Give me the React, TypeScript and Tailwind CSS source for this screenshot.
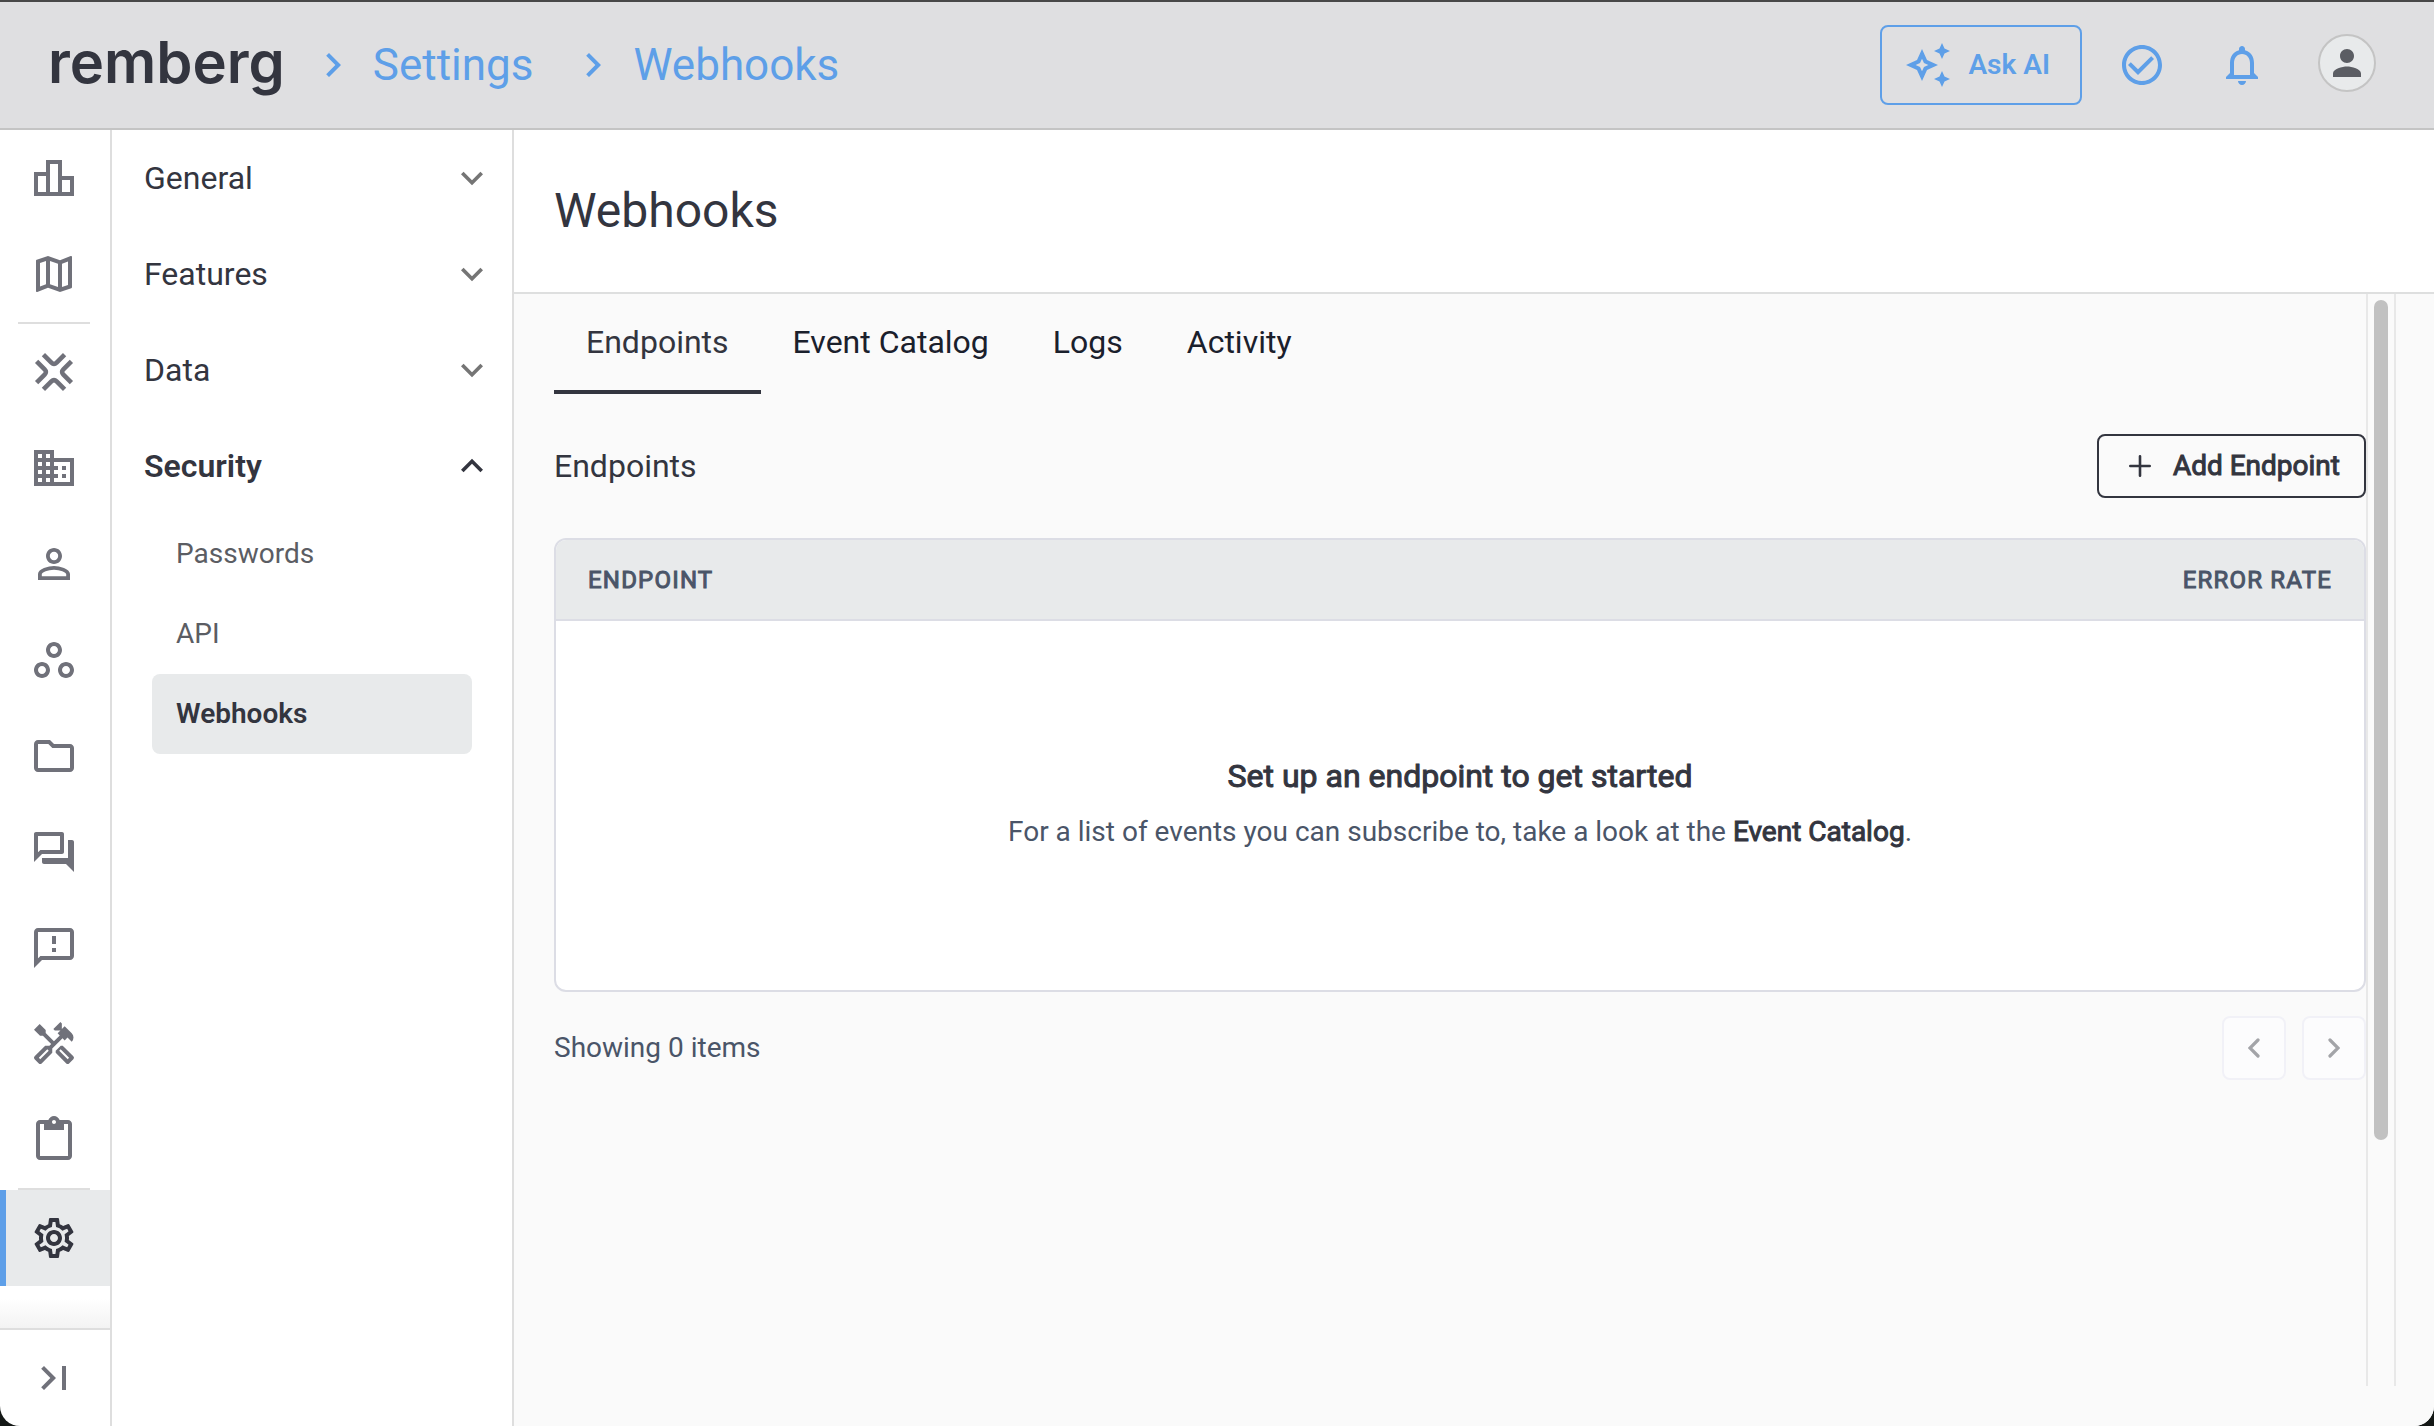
import { useState } from "react";
import type { IconType } from "react-icons";
import {
  MdCheckCircleOutline,
  MdChevronRight,
  MdContentPaste,
  MdExpandLess,
  MdExpandMore,
  MdLastPage,
  MdNotificationsNone,
  MdOutlineAutoAwesome,
  MdOutlineBusiness,
  MdOutlineFeedback,
  MdOutlineFolder,
  MdOutlineForum,
  MdOutlineHandyman,
  MdOutlineLeaderboard,
  MdOutlineMap,
  MdOutlineSettings,
  MdOutlineWorkspaces,
  MdPerson,
  MdPersonOutline,
} from "react-icons/md";

const AssetsIcon = () => (
  <svg
    viewBox="0 0 24 24"
    className="size-12"
    fill="none"
    stroke="currentColor"
    strokeWidth="2.3"
  >
    <path d="M6.7 3.3l4 4q1.3 1.3 2.6 0l4-4" />
    <path d="M6.7 20.7l4-4q1.3-1.3 2.6 0l4 4" />
    <path d="M3.3 6.7l4 4q1.3 1.3 0 2.6l-4 4" />
    <path d="M20.7 6.7l-4 4q-1.3 1.3 0 2.6l4 4" />
  </svg>
);

const overviewLinks = [
  { label: "Dashboard", Icon: MdOutlineLeaderboard },
  { label: "Map", Icon: MdOutlineMap },
];

const moduleLinks = [
  { label: "Assets", Icon: AssetsIcon as IconType },
  { label: "Organizations", Icon: MdOutlineBusiness },
  { label: "Contacts", Icon: MdPersonOutline },
  { label: "Parts", Icon: MdOutlineWorkspaces },
  { label: "Files", Icon: MdOutlineFolder },
  { label: "Cases", Icon: MdOutlineForum },
  { label: "Tickets", Icon: MdOutlineFeedback },
  { label: "Work Orders", Icon: MdOutlineHandyman },
  { label: "Forms", Icon: MdContentPaste },
];

const settingsGroups = [
  { title: "General", items: [] },
  { title: "Features", items: [] },
  { title: "Data", items: [] },
  { title: "Security", items: ["Passwords", "API", "Webhooks"] },
];

const tabs = ["Endpoints", "Event Catalog", "Logs", "Activity"];

const PageChevron = ({ left }: { left?: boolean }) => (
  <svg
    viewBox="0 0 12 20"
    className="h-5 w-3"
    fill="none"
    stroke="currentColor"
    strokeWidth="3.2"
    strokeLinecap="round"
  >
    <path d={left ? "M10 2l-8 8 8 8" : "M2 2l8 8-8 8"} />
  </svg>
);

const RailLink = ({ label, Icon }: { label: string; Icon: IconType }) => (
  <a
    href="#"
    aria-label={label}
    className="flex h-24 w-full items-center pl-[30px] text-[#70717a]"
  >
    <Icon className="size-12" />
  </a>
);

const Header = () => (
  <header className="flex h-[130px] shrink-0 items-center justify-between border-t-2 border-b-2 border-t-[#484848] border-b-[#c4c4c4] bg-[#dfdfe1] pr-[58px] pl-12 text-[#5e9fe8]">
    <nav className="flex items-center text-[44px] leading-[56px]">
      <a
        href="#"
        className="pb-1.5 font-[Inter,sans-serif] text-[58px] font-semibold text-[#33353f]"
      >
        remberg
      </a>
      <MdChevronRight className="mr-4 ml-6 size-12" />
      <a href="#">Settings</a>
      <MdChevronRight className="mr-4 ml-9 size-12" />
      <a href="#">Webhooks</a>
    </nav>
    <div className="flex items-center">
      <button className="flex h-20 items-center gap-4 rounded-lg border-2 border-[#5e9fe8] pr-[30px] pl-[22px] text-[28px] font-semibold">
        <MdOutlineAutoAwesome className="size-12" />
        Ask AI
      </button>
      <button aria-label="Tasks" className="ml-9">
        <MdCheckCircleOutline className="size-12" />
      </button>
      <button aria-label="Notifications" className="ml-[52px]">
        <MdNotificationsNone className="size-12" />
      </button>
      <button
        aria-label="Account"
        className="mb-1 ml-[52px] flex size-[58px] items-center justify-center rounded-full border-2 border-[#c4c4c4] bg-[#e8eaeb] text-[#5b5d63]"
      >
        <MdPerson className="size-[42px]" />
      </button>
    </div>
  </header>
);

const Rail = () => (
  <aside className="flex w-28 shrink-0 flex-col border-r-2 border-[#dedede]">
    {overviewLinks.map((link) => (
      <RailLink key={link.label} {...link} />
    ))}
    <hr className="mr-5 ml-[18px] border-t-2 border-[#dedede]" />
    {moduleLinks.map((link) => (
      <RailLink key={link.label} {...link} />
    ))}
    <hr className="mr-5 ml-[18px] border-t-2 border-[#dedede]" />
    <a
      href="#"
      aria-label="Settings"
      className="flex h-24 items-center border-l-6 border-[#5e9fe8] bg-[#e8eaeb] pl-6 text-[#33353f]"
    >
      <MdOutlineSettings className="size-12" />
    </a>
    <div className="min-h-4 flex-1 bg-linear-to-b from-white from-30% to-[#f3f3f3]" />
    <button
      aria-label="Expand navigation"
      className="flex h-[98px] items-center border-t-2 border-[#dedede] pl-[30px] text-[#70717a]"
    >
      <MdLastPage className="size-12" />
    </button>
  </aside>
);

const SettingsNav = () => {
  const [open, setOpen] = useState("Security");

  return (
    <nav className="w-[402px] shrink-0 border-r-2 border-[#dedede]">
      {settingsGroups.map(({ title, items }) => {
        const isOpen = open === title;
        return (
          <div key={title}>
            <button
              onClick={() => setOpen(isOpen ? "" : title)}
              aria-expanded={isOpen}
              className={`flex h-24 w-full items-center justify-between pr-[18px] pl-8 text-[32px] ${
                isOpen ? "font-semibold" : ""
              }`}
            >
              {title}
              {isOpen ? (
                <MdExpandLess className="size-11" />
              ) : (
                <MdExpandMore className="size-11 text-[#757575]" />
              )}
            </button>
            {isOpen && (
              <div className="mr-10 ml-10">
                {items.map((item) => (
                  <a
                    key={item}
                    href="#"
                    className={`flex h-20 items-center rounded-lg px-6 text-[28px] ${
                      item === "Webhooks"
                        ? "bg-[#e8eaeb] font-semibold"
                        : "text-[#5b5d63]"
                    }`}
                  >
                    {item}
                  </a>
                ))}
              </div>
            )}
          </div>
        );
      })}
    </nav>
  );
};

const EndpointsTable = () => (
  <div className="mt-10 overflow-hidden rounded-xl border-2 border-[#dcdde5] bg-white">
    <table className="w-full">
      <thead className="border-b-2 border-[#dcdde5] bg-[#e8eaeb] text-2xl tracking-wider text-[#4a5568] uppercase [-webkit-text-stroke:1px]">
        <tr className="h-20">
          <th className="px-8 text-left font-normal">Endpoint</th>
          <th className="px-8 text-right font-normal">Error Rate</th>
        </tr>
      </thead>
      <tbody>
        <tr>
          <td colSpan={2} className="h-[370px] pb-1 text-center">
            <h3 className="text-[32px] leading-[48px] [-webkit-text-stroke:1px]">
              Set up an endpoint to get started
            </h3>
            <p className="mt-2 text-[28px] leading-[48px] text-[#4a5568]">
              For a list of events you can subscribe to, take a look at the{" "}
              <a
                href="#"
                className="text-[#33353f] [-webkit-text-stroke:1px]"
              >
                Event Catalog
              </a>
              .
            </p>
          </td>
        </tr>
      </tbody>
    </table>
  </div>
);

const Pagination = () => (
  <div className="mt-6 flex items-center justify-between text-[28px] text-[#4a5568]">
    <span>Showing 0 items</span>
    <div className="flex gap-4">
      <button
        aria-label="Previous page"
        className="flex size-16 items-center justify-center rounded-lg border-2 border-[#f1f1f7] bg-[#fcfcfd] text-[#a3a4a8]"
      >
        <PageChevron left />
      </button>
      <button
        aria-label="Next page"
        className="flex size-16 items-center justify-center rounded-lg border-2 border-[#f1f1f7] bg-[#fcfcfd] text-[#a3a4a8]"
      >
        <PageChevron />
      </button>
    </div>
  </div>
);

export default function App() {
  const [activeTab, setActiveTab] = useState("Endpoints");

  return (
    <div className="h-screen bg-[#141816]">
      <div className="flex h-full flex-col overflow-hidden rounded-b-[20px] bg-white font-[Roboto,sans-serif] text-[#33353f]">
        <Header />
        <div className="flex min-h-0 flex-1">
          <Rail />
          <SettingsNav />
          <main className="flex min-w-0 flex-1 flex-col bg-[#fafafa]">
            <div className="flex h-[164px] shrink-0 items-center border-b-2 border-[#dedfdf] bg-white px-10">
              <h1 className="text-5xl">Webhooks</h1>
            </div>
            <div className="mr-[38px] mb-10 flex min-h-0 flex-1">
              <section className="min-w-0 flex-1 pl-10">
                <div role="tablist" className="flex">
                  {tabs.map((tab) => (
                    <button
                      key={tab}
                      role="tab"
                      aria-selected={activeTab === tab}
                      onClick={() => setActiveTab(tab)}
                      className={`h-[100px] border-b-4 px-8 text-[32px] ${
                        activeTab === tab
                          ? "border-[#33353f]"
                          : "border-transparent text-[#1a202c]"
                      }`}
                    >
                      {tab}
                    </button>
                  ))}
                </div>
                <div className="mt-10 flex items-center justify-between">
                  <h2 className="text-[32px]">Endpoints</h2>
                  <button className="flex h-16 items-center gap-[22px] rounded-lg border-2 border-[#33353f] pr-6 pl-[30px] text-[28px] [-webkit-text-stroke:1px]">
                    <svg
                      viewBox="0 0 22 22"
                      className="size-[22px]"
                      stroke="currentColor"
                      strokeWidth="2.6"
                      strokeLinecap="round"
                    >
                      <path d="M11 1.3v19.4M1.3 11h19.4" />
                    </svg>
                    Add Endpoint
                  </button>
                </div>
                <EndpointsTable />
                <Pagination />
              </section>
              <div className="w-[30px] shrink-0 border-r-2 border-l-2 border-[#e8e8e8] px-1.5 pt-1.5">
                <div className="h-[840px] max-h-full rounded-full bg-[#c1c1c1]" />
              </div>
            </div>
          </main>
        </div>
      </div>
    </div>
  );
}
